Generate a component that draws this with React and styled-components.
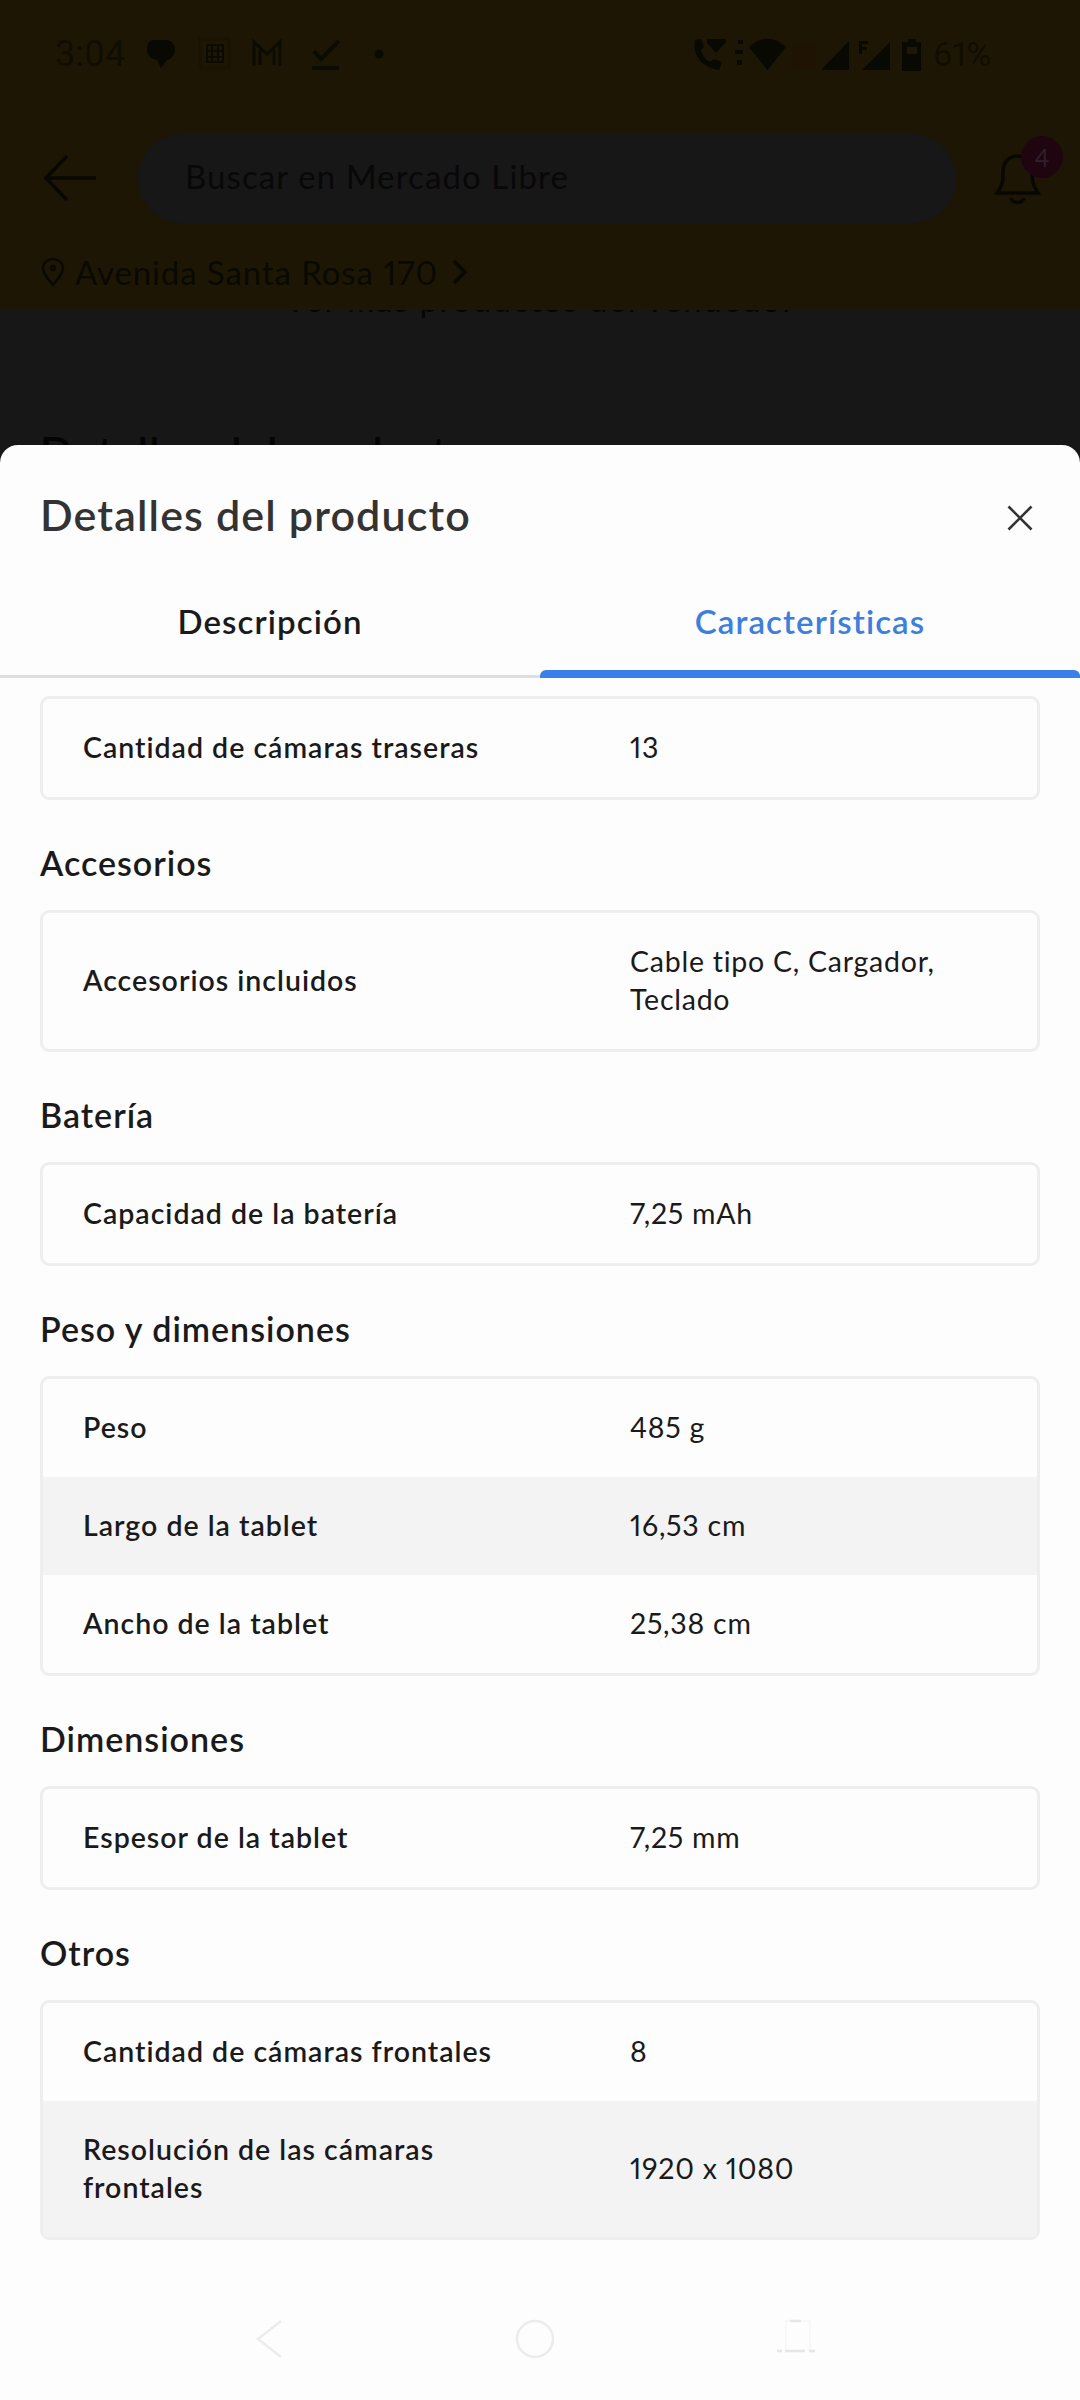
import React from 'react';
import styled, { createGlobalStyle } from 'styled-components';

const GlobalStyle = createGlobalStyle`
  * {
    box-sizing: border-box;
  }

  body {
    margin: 0;
    background: #171717;
    font-family: Lato, 'Open Sans', sans-serif;
    font-variant-numeric: proportional-nums;
  }
`;

const Screen = styled.div`
  width: 1080px;
  height: 2400px;
  display: flex;
  flex-direction: column;
  overflow: hidden;
  background: #171717;
`;

// everything behind the sheet is already dimmed
const Header = styled.header`
  height: 310px;
  flex: none;
  background: #1e1604;
  color: #090902;
`;

const StatusBar = styled.div`
  height: 108px;
  padding: 0 89px 0 55px;
  display: flex;
  align-items: center;
  justify-content: space-between;
  font-family: Roboto, sans-serif;
  font-size: 36px;
  color: #100d03;
`;

const StatusGroup = styled.div`
  display: flex;
  align-items: center;
  gap: ${(props) => props.$gap}px;
`;

const Battery = styled.span`
  font-size: 34px;
  letter-spacing: -0.3px;
`;

const SearchRow = styled.div`
  height: 143px;
  padding: 0 34px 3px 43px;
  display: flex;
  align-items: center;
`;

const SearchBox = styled.div`
  width: 818px;
  height: 89px;
  margin-left: 41px;
  padding: 0 0 4px 47px;
  display: flex;
  align-items: center;
  border-radius: 44px;
  background: #171718;
  color: #080808;
  font-size: 33px;
  letter-spacing: 1.1px;
`;

const Bell = styled.div`
  position: relative;
  margin-left: 38px;
  height: 54px;
`;

const Badge = styled.span`
  position: absolute;
  top: -15px;
  right: -19px;
  width: 42px;
  height: 42px;
  border-radius: 50%;
  display: flex;
  align-items: center;
  justify-content: center;
  background: #1e0510;
  color: #302029;
  font-size: 25px;
`;

const Address = styled.div`
  height: 42px;
  padding-left: 41px;
  display: flex;
  align-items: center;
  font-size: 33px;
  letter-spacing: 0.9px;

  span {
    margin: 0 13px 1px 10px;
  }
`;

const Backdrop = styled.div`
  height: 135px;
  flex: none;
  display: flex;
  flex-direction: column;
  justify-content: space-between;
  color: #050505;
`;

const SellerLink = styled.div`
  height: 9px;
  overflow: hidden;
  display: flex;
  justify-content: center;
  align-items: flex-end;
  font-size: 33px;
  line-height: 40px;
  letter-spacing: 1.5px;
`;

const HiddenTitle = styled.div`
  height: 10px;
  padding-left: 40px;
  overflow: hidden;
  font-size: 43px;
  font-weight: 600;
  line-height: 33px;
  letter-spacing: 1.3px;
`;

const Sheet = styled.main`
  flex: 1;
  display: flex;
  flex-direction: column;
  background: #fdfdfd;
  border-radius: 18px 18px 0 0;
`;

const SheetHeader = styled.div`
  height: 145px;
  padding: 0 47px 0 40px;
  display: flex;
  align-items: center;
  justify-content: space-between;
`;

const Title = styled.h1`
  margin: 0;
  padding-bottom: 6px;
  color: #333;
  font-size: 43px;
  font-weight: 600;
  letter-spacing: 1.15px;
`;

const Tabs = styled.div`
  height: 88px;
  flex: none;
  display: flex;
`;

const Tab = styled.div`
  position: relative;
  flex: 1;
  padding-top: 9px;
  text-align: center;
  font-size: 33px;
  font-weight: 600;
  line-height: 44px;
  letter-spacing: 1.1px;
  color: ${(props) => (props.$active ? '#3c7fdc' : '#1a1a1a')};
  border-bottom: 3px solid ${(props) => (props.$active ? '#3a80ea' : '#dfdfdf')};

  &::after {
    content: '';
    position: absolute;
    left: 0;
    right: 0;
    bottom: -3px;
    height: 8px;
    border-radius: 6px 6px 0 0;
    background: ${(props) => (props.$active ? '#3a80ea' : 'transparent')};
  }
`;

const Content = styled.div`
  flex: 1;
  padding: 18px 40px 0;
`;

const SectionTitle = styled.h2`
  margin: 0;
  height: 110px;
  padding-top: 41px;
  color: #1a1a1a;
  font-size: 34px;
  font-weight: 600;
  line-height: 44px;
  letter-spacing: 1px;
`;

const Table = styled.div`
  border: 3px solid #eeeeee;
  border-radius: 9px;
  overflow: hidden;
`;

const Row = styled.div`
  display: flex;
  align-items: center;
  padding: 29px 40px 31px;
  font-size: 28.5px;
  line-height: 38px;
  color: #1a1a1a;

  &:nth-child(even) {
    background: #f3f3f3;
  }
`;

const Label = styled.div`
  width: 547px;
  flex: none;
  padding-right: 100px;
  font-weight: 600;
  letter-spacing: 1px;
`;

const Value = styled.div`
  letter-spacing: 0.75px;
`;

const NavBar = styled.nav`
  height: 122px;
  flex: none;
  padding: 0 264px 0 256px;
  display: flex;
  align-items: center;
  justify-content: space-between;

  svg:nth-child(2) {
    margin-left: 11px;
  }
`;

const sections = [
  { rows: [['Cantidad de cámaras traseras', '13']] },
  {
    title: 'Accesorios',
    rows: [['Accesorios incluidos', 'Cable tipo C, Cargador, Teclado']],
  },
  { title: 'Batería', rows: [['Capacidad de la batería', '7,25 mAh']] },
  {
    title: 'Peso y dimensiones',
    rows: [
      ['Peso', '485 g'],
      ['Largo de la tablet', '16,53 cm'],
      ['Ancho de la tablet', '25,38 cm'],
    ],
  },
  { title: 'Dimensiones', rows: [['Espesor de la tablet', '7,25 mm']] },
  {
    title: 'Otros',
    rows: [
      ['Cantidad de cámaras frontales', '8'],
      ['Resolución de las cámaras frontales', '1920 x 1080'],
    ],
  },
];

const StatusIcons = () => (
  <svg width="252" height="34" viewBox="0 0 252 34" fill="none" stroke="#0c0b02" strokeWidth="3">
    <path d="M15 3h12c5 0 9 4 9 9s-3 10-8 11l-6 8-4-8c-6-1-10-5-10-11 0-5 2-9 7-9z" fill="#080902" stroke="none" />
    <rect x="61" y="2" width="29" height="29" stroke="#1b1203" />
    <path d="M68 8h16v17H68zM68 14h16M68 20h16M73 8v17M79 8v17" strokeWidth="2" />
    <path d="M115 29V5l13 12 13-12v24M121 28V13M135 28V13" />
    <path d="M175 14l7 8L200 4M173 31h27" strokeWidth="4" />
    <circle cx="240" cy="17" r="4.500" fill="#0c0b02" stroke="none" />
  </svg>
);

const SignalIcons = () => (
  <svg width="231" height="36" viewBox="0 0 231 36" fill="#080902">
    <path d="M1 4C-2 20 8 31 25 34l3-8-8-3-4 3C10 23 8 18 7 14l3-3-3-8z" />
    <path d="M13 3h19v3L22 17l-9-10z" />
    <path d="M44 4h5v4h-5zM41 14h8v4h-8zM43 24h5v5h-5z" />
    <path d="M55 11C66 0 81 0 92 11L73.500 34z" />
    <path d="M98 9h24v22h-24z" fill="#1f1403" />
    <path d="M127 34L155 5v29z" />
    <path d="M168 34L196 6v28z" />
    <path d="M165 5h9v3h-6v3h5v3h-5v4h-3z" />
    <path d="M214 3h8v3h5v29h-19V6h6zm-1 8v7h10v-7z" fillRule="evenodd" />
  </svg>
);

const App = () => {
  return (
    <>
      <GlobalStyle />
      <Screen>
        <Header>
          <StatusBar>
            <StatusGroup $gap={14}>
              <span>3:04</span>
              <StatusIcons />
            </StatusGroup>
            <StatusGroup $gap={8}>
              <SignalIcons />
              <Battery>61%</Battery>
            </StatusGroup>
          </StatusBar>
          <SearchRow>
            <svg width="54" height="48" viewBox="0 0 54 48" fill="none" stroke="#080702" strokeWidth="3.500">
              <path d="M24 2L3 24l21 22M3 24h50" />
            </svg>
            <SearchBox>Buscar en Mercado Libre</SearchBox>
            <Bell>
              <svg width="50" height="54" viewBox="0 0 50 54" fill="none" stroke="#080702" strokeWidth="3.500">
                <path d="M3 42C9 34 9 30 9 21c0-10 6-16 14-16s15 6 15 16c0 9 1 13 6 21zM17 47c2 6 11 6 13 0" />
              </svg>
              <Badge>4</Badge>
            </Bell>
          </SearchRow>
          <Address>
            <svg width="24" height="30" viewBox="0 0 24 30" fill="none" stroke="#090902" strokeWidth="2.500">
              <path d="M12 28C6 21 2 16 2 11a10 9 0 0 1 20 0c0 5-4 10-10 17z" />
              <circle cx="12" cy="11" r="2" />
            </svg>
            <span>Avenida Santa Rosa 170</span>
            <svg width="17" height="26" viewBox="0 0 17 26" fill="none" stroke="#090902" strokeWidth="3.500">
              <path d="M3 2l11 11L3 24" />
            </svg>
          </Address>
        </Header>
        <Backdrop>
          <SellerLink>Ver más productos del vendedor</SellerLink>
          <HiddenTitle>Detalles del producto</HiddenTitle>
        </Backdrop>
        <Sheet>
          <SheetHeader>
            <Title>Detalles del producto</Title>
            <svg width="26" height="26" viewBox="0 0 26 26" fill="none" stroke="#333" strokeWidth="2.600">
              <path d="M1.500 1.500l23 23M24.500 1.500l-23 23" />
            </svg>
          </SheetHeader>
          <Tabs>
            <Tab>Descripción</Tab>
            <Tab $active>Características</Tab>
          </Tabs>
          <Content>
            {sections.map((section, index) => (
              <section key={index}>
                {section.title && <SectionTitle>{section.title}</SectionTitle>}
                <Table>
                  {section.rows.map(([label, value]) => (
                    <Row key={label}>
                      <Label>{label}</Label>
                      <Value>{value}</Value>
                    </Row>
                  ))}
                </Table>
              </section>
            ))}
          </Content>
          <NavBar>
            <svg width="27" height="40" viewBox="0 0 27 40" fill="none" stroke="#ececec" strokeWidth="2.500">
              <path d="M25 2L2 20l23 18" />
            </svg>
            <svg width="40" height="40" viewBox="0 0 40 40" fill="none" stroke="#ececec" strokeWidth="2.500">
              <circle cx="20" cy="20" r="18" />
            </svg>
            <svg width="40" height="40" viewBox="0 0 40 40" fill="none" strokeWidth="2">
              <path d="M10 32V2h24v30" stroke="#f7f7f7" />
              <path d="M14 2h11M1 32h5M9 32h20M33 32h6" stroke="#e6e6e6" strokeWidth="2.500" />
            </svg>
          </NavBar>
        </Sheet>
      </Screen>
    </>
  );
};

export default App;
